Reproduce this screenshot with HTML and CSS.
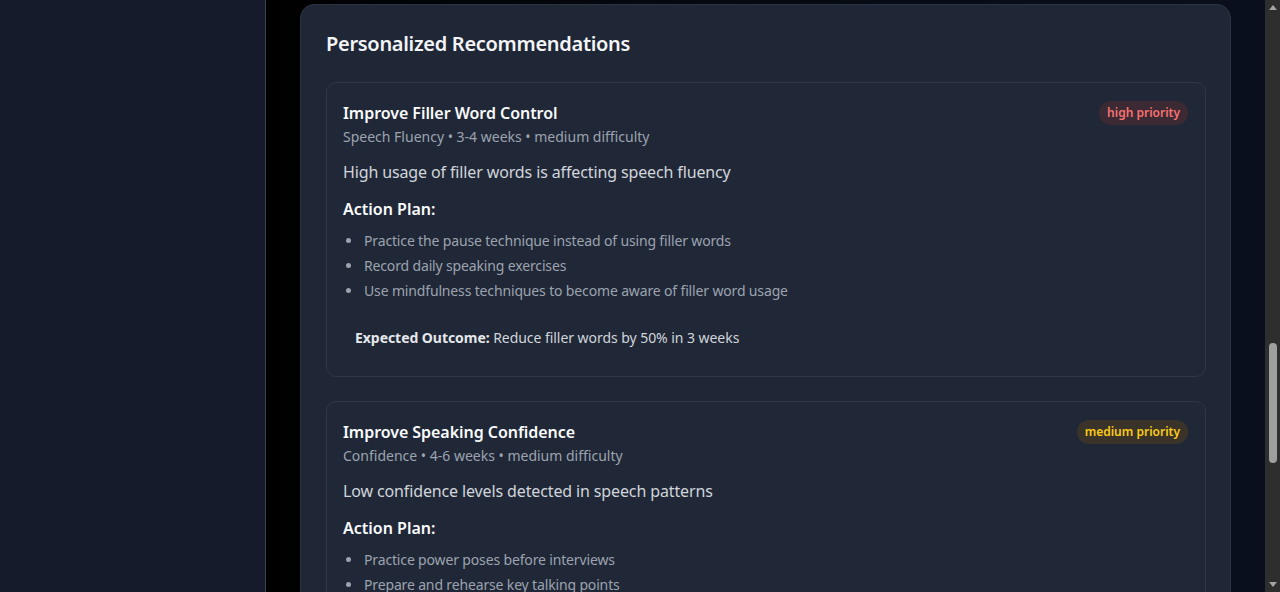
FILE: index.html
```html
<!DOCTYPE html>
<html lang="en">
<head>
<meta charset="utf-8">
<title>Personalized Recommendations</title>
<link rel="stylesheet" href="styles.css">
</head>
<body>
<div class="app">
  <aside class="sidebar"></aside>
  <main class="main">
    <section class="panel">
      <h2 class="panel-title">Personalized Recommendations</h2>
      <div class="rec-list">
        <article class="rec">
          <div class="rec-head">
            <div>
              <h3 class="rec-title">Improve Filler Word Control</h3>
              <p class="rec-meta">Speech Fluency • 3-4 weeks • medium difficulty</p>
            </div>
            <span class="badge badge-high">high priority</span>
          </div>
          <p class="rec-desc">High usage of filler words is affecting speech fluency</p>
          <h4 class="rec-sub">Action Plan:</h4>
          <ul class="rec-steps">
            <li>Practice the pause technique instead of using filler words</li>
            <li>Record daily speaking exercises</li>
            <li>Use mindfulness techniques to become aware of filler word usage</li>
          </ul>
          <div class="outcome"><strong>Expected Outcome:</strong> Reduce filler words by 50% in 3 weeks</div>
        </article>
        <article class="rec">
          <div class="rec-head">
            <div>
              <h3 class="rec-title">Improve Speaking Confidence</h3>
              <p class="rec-meta">Confidence • 4-6 weeks • medium difficulty</p>
            </div>
            <span class="badge badge-medium">medium priority</span>
          </div>
          <p class="rec-desc">Low confidence levels detected in speech patterns</p>
          <h4 class="rec-sub">Action Plan:</h4>
          <ul class="rec-steps">
            <li>Practice power poses before interviews</li>
            <li>Prepare and rehearse key talking points</li>
            <li>Focus on speaking slowly and clearly</li>
          </ul>
          <div class="outcome"><strong>Expected Outcome:</strong> Increase confidence score by 20 points</div>
        </article>
      </div>
    </section>
  </main>
  <div class="scrollbar">
    <div class="sb-arrow sb-up"></div>
    <div class="sb-track"><div class="sb-thumb"></div></div>
    <div class="sb-arrow sb-down"></div>
  </div>
</div>
</body>
</html>
```

FILE: styles.css
```css
* { box-sizing: border-box; }
html, body { margin: 0; padding: 0; height: 100%; }
body {
  font-family: "Noto Sans", "Open Sans", "Liberation Sans", sans-serif;
  background: #000;
  color: #e5e7eb;
  overflow: hidden;
}
.app {
  display: flex;
  height: 592px;
  overflow: hidden;
}
.sidebar {
  width: 266px;
  flex: none;
  background: #151b2b;
  border-right: 1px solid #3a4250;
}
.main {
  flex: 1;
  background: linear-gradient(90deg, #000 0%, #05080f 40%, #0a0f1d 100%);
  padding: 4px 34px 0 34px;
  overflow: hidden;
}
.panel {
  background: #1f2736;
  border: 1px solid #2b3444;
  border-radius: 14px;
  padding: 24px 24px 0 25px;
  min-height: 700px;
}
.panel-title {
  margin: 0 0 23px 0;
  font-size: 20px;
  line-height: 30px;
  font-weight: 600;
  letter-spacing: -0.3px;
  color: #f3f4f6;
}
.rec-list {
  display: flex;
  flex-direction: column;
  gap: 24px;
}
.rec {
  background: #202837;
  border: 1px solid #2e3746;
  border-radius: 10px;
  padding: 16px 17px 16px 16px;
}
.rec-head {
  display: flex;
  justify-content: space-between;
  align-items: flex-start;
}
.rec-title {
  margin: 0;
  font-size: 16px;
  line-height: 28px;
  font-weight: 600;
  letter-spacing: -0.05px;
  color: #f9fafb;
}
.rec-meta {
  margin: 0;
  font-size: 14px;
  line-height: 20px;
  color: #9ca3af;
}
.badge {
  margin-top: 2px;
  padding: 2px 8px;
  border-radius: 999px;
  font-size: 12px;
  line-height: 20px;
  font-weight: 600;
}
.badge-high { background: #3b2a33; color: #f87171; }
.badge-medium { background: #3a3329; color: #facc15; }
.rec-desc {
  margin: 13px 0 13px 0;
  font-size: 16px;
  line-height: 24px;
  letter-spacing: -0.13px;
  color: #d1d5db;
}
.rec-sub {
  margin: 0 0 10px 0;
  font-size: 16px;
  line-height: 24px;
  font-weight: 600;
  color: #f9fafb;
}
.rec-steps {
  margin: 0;
  padding: 0 0 0 20px;
  list-style: disc;
  color: #9ca3af;
  font-size: 14px;
  line-height: 20px;
  letter-spacing: -0.15px;
}
.rec-steps li { margin-bottom: 5px; padding-left: 1px; }
.rec-steps li:last-child { margin-bottom: 0; }
.rec-steps li::marker { color: #9ca3af; }
.outcome {
  margin-top: 15px;
  padding: 12px;
  font-size: 14px;
  line-height: 20px;
  letter-spacing: -0.05px;
  color: #d1d5db;
}
.outcome strong { color: #e5e7eb; font-weight: 700; }
.scrollbar {
  width: 15px;
  flex: none;
  background: #2e2e2e;
  display: flex;
  flex-direction: column;
  align-items: center;
}
.sb-arrow {
  height: 15px;
  width: 15px;
  display: flex;
  align-items: center;
  justify-content: center;
}
.sb-up::before {
  content: "";
  border-left: 4px solid transparent;
  border-right: 4px solid transparent;
  border-bottom: 5px solid #a3a3a3;
}
.sb-down::before {
  content: "";
  border-left: 4px solid transparent;
  border-right: 4px solid transparent;
  border-top: 5px solid #a3a3a3;
}
.sb-track {
  flex: 1;
  width: 100%;
  padding-top: 328px;
  display: flex;
  justify-content: center;
}
.sb-thumb {
  width: 8px;
  height: 120px;
  background: #9f9f9f;
  border-radius: 4px;
}
```
